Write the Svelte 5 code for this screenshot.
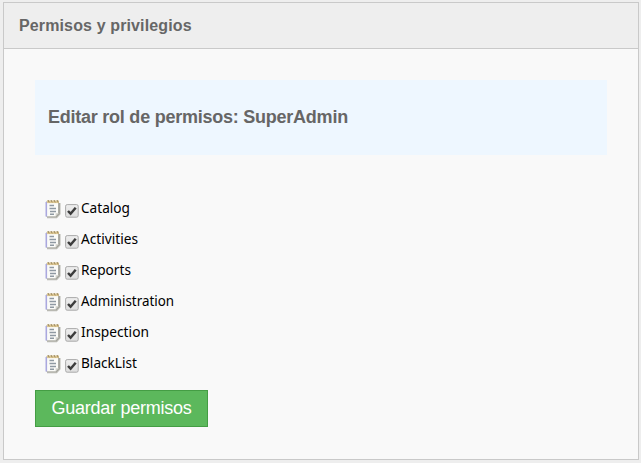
<script>
  let permissions = $state([
    { name: 'Catalog', width: 49 },
    { name: 'Activities', width: 57 },
    { name: 'Reports', width: 50 },
    { name: 'Administration', width: 93 },
    { name: 'Inspection', width: 68 },
    { name: 'BlackList', width: 56 }
  ]);
</script>

<main class="page">
  <section class="panel">
    <header><h1>Permisos y privilegios</h1></header>
    <div class="body">
      <div class="banner"><h2>Editar rol de permisos: SuperAdmin</h2></div>
      <ul>
        {#each permissions as p}
          <li>
            <svg class="note" width="16" height="20" viewBox="0 0 16 20">
              <path d="M2 18.3H11.5L14.6 15V4" fill="none" stroke="#b9b9b2" stroke-width="1.8" />
              <path d="M1.5 2.5H13.5V14.5L10.8 17.5H1.5z" fill="#fbfbf8" stroke="#c4c4be" />
              <path d="M1.3 3V17.5" stroke="#aaa8df" stroke-width="1.6" />
              <path d="M14 4V14.5L11 17.8" fill="none" stroke="#94948c" />
              <path d="M10.6 17.2V14.3H13.6z" fill="#d2d2cb" />
              <path d="M2 2.8H14" stroke="#dcc692" stroke-width="2.6" />
              <path d="M3 1l1.2 2.4M6 1l1.2 2.4M9 1l1.2 2.4M12 1l1.2 2.4" stroke="#99875e" stroke-width="1" />
              <path d="M4.5 6.5H9M4.5 9.5H11M5 12.5H11M5 15.2H9" stroke="#8f99a2" stroke-width="1.5" />
            </svg>
            <svg class="check" width="14" height="14" viewBox="0 0 14 14">
              <defs>
                <linearGradient id="face" x1="0" y1="0" x2="0" y2="1">
                  <stop offset="0" stop-color="#eeeeee" />
                  <stop offset="1" stop-color="#dedede" />
                </linearGradient>
              </defs>
              <rect x=".6" y=".6" width="12.6" height="12.6" rx="1.6" fill="url(#face)" stroke="#aaaaaa" />
              <path d="M3 7L5.6 9.7L10.7 3.7" fill="none" stroke="#3c3c3c" stroke-width="2.5" />
            </svg>
            <svg class="label" width={p.width + 2} height="20">
              <text x="0" y="15" textLength={p.width} lengthAdjust="spacingAndGlyphs">{p.name}</text>
            </svg>
          </li>
        {/each}
      </ul>
      <button type="button">Guardar permisos</button>
    </div>
  </section>
</main>

<style>
  :global(body) {
    margin: 0;
    background: #eeeeee;
  }
  .page {
    box-sizing: border-box;
    height: 463px;
    padding: 2px 2px 3px 3px;
    font-family: "Liberation Sans", Arial, sans-serif;
  }
  .panel {
    box-sizing: border-box;
    height: 458px;
    border: 1px solid #c9c9c9;
    background: #f9f9f9;
  }
  header {
    height: 45px;
    padding-left: 15px;
    display: flex;
    align-items: center;
    background: #eeeeee;
    border-bottom: 1px solid #c9c9c9;
  }
  h1, h2 {
    margin: 0;
    color: #666666;
    font-weight: bold;
    white-space: nowrap;
  }
  h1 {
    font-size: 16px;
    line-height: 20px;
    letter-spacing: 0.13px;
  }
  .body {
    padding: 31px 31px 0;
  }
  .banner {
    box-sizing: border-box;
    height: 75px;
    padding: 0 0 2px 13px;
    display: flex;
    align-items: center;
    background: #eef7ff;
  }
  h2 {
    font-size: 18px;
    line-height: 22px;
    letter-spacing: -0.24px;
  }
  ul {
    list-style: none;
    margin: 43px 0 0;
    padding: 0 0 0 10px;
  }
  li {
    height: 31px;
    display: flex;
    align-items: flex-start;
  }
  svg {
    display: block;
  }
  .note {
    margin-top: 1px;
  }
  .check {
    margin: 6px 2px 0 4px;
  }
  .label {
    overflow: visible;
    font-family: "Noto Sans", sans-serif;
    font-size: 14.6px;
    fill: #000;
  }
  button {
    display: block;
    box-sizing: border-box;
    width: 173px;
    height: 37px;
    margin-top: 6px;
    padding: 0 0 2px;
    border: 1px solid #449d44;
    border-radius: 0;
    background: #5cb85c;
    color: #fff;
    font-family: inherit;
    font-size: 18px;
    line-height: 24px;
    letter-spacing: -0.25px;
    white-space: nowrap;
  }
</style>
